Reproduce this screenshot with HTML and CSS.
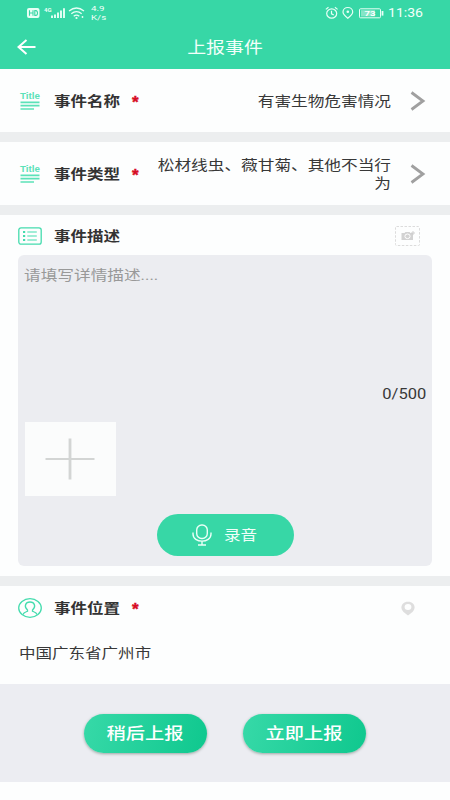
FILE: index.html
```html
<!DOCTYPE html>
<html lang="zh-CN">
<head>
<meta charset="utf-8">
<title>上报事件</title>
<link rel="stylesheet" href="styles.css">
</head>
<body>
<header class="header">
  <div class="status">
    <svg class="signals" width="60" height="16" viewBox="0 0 60 16">
      <rect x="0" y="3" width="12.5" height="10" rx="2" fill="#e8fff6"/>
      <path d="M2.5 5.3v5.4M6 5.3v5.4M2.5 8H6M7.8 5.6v4.8h1.1q1.6 0 1.6-2.4T8.900 5.600z" fill="none" stroke="#37d7a6" stroke-width="1.1"/>
      <path d="M25 13v-2.500M28 13V9.500M31 13V7.500M34 13V5.500M37 13V3.200" stroke="#e8fff6" stroke-width="1.9"/>
      <g fill="none" stroke="#e8fff6" stroke-width="1.3"><path d="M42 6q7.500-6 15 0M44.300 8.700q5.200-4.200 10.400 0M46.700 11.200q2.800-2.200 5.600 0"/></g>
      <circle cx="49.500" cy="13" r="1.100" fill="#e8fff6"/><circle cx="55.500" cy="12" r=".9" fill="#e8fff6"/>
      <text class="tiny" x="17" y="7">4G</text>
    </svg>
    <div class="speed"><span>4.9</span><span>K/s</span></div>
    <svg class="indicators" width="60" height="16" viewBox="0 0 60 16">
      <g fill="none" stroke="#e8fff6" stroke-width="1.200">
        <ellipse cx="6.700" cy="8.500" rx="5" ry="4.600"/><path d="M6.500 5.800v3l2.300 1.300M.8 4.400l2.700-2.100M12.600 4.400L9.900 2.300"/>
        <path d="M22.800 13.300Q18 9.500 18 7c0-6 9.700-6 9.700 0q0 2.500-4.900 6.300z"/>
        <rect x="34.500" y="3.800" width="21" height="9" rx="1" stroke-width="1"/>
      </g>
      <circle cx="22.800" cy="6.800" r="1.300" fill="#e8fff6"/>
      <rect x="36" y="5.200" width="14" height="6.200" fill="#86e5c7"/><rect x="56.600" y="6" width="1.800" height="4.600" fill="#e8fff6"/>
      <text class="battery" x="39.500" y="11.300" textLength="11" lengthAdjust="spacingAndGlyphs">73</text>
    </svg>
    <span class="clock">11:36</span>
  </div>
  <div class="nav">
    <svg class="back" width="20" height="16" viewBox="0 0 20 16"><path d="M18.500 8H2M9.500 1L1.500 8l8 7" fill="none" stroke="#fff" stroke-width="2"/></svg>
    <h1 class="wide">上报事件</h1>
  </div>
</header>

<section class="row">
  <svg class="icon" width="24" height="20" viewBox="0 0 24 20"><text class="title-icon" x="2" y="8.300" textLength="20" lengthAdjust="spacingAndGlyphs">Title</text><path d="M2.500 11.300h19M2.500 14.700h19M2.500 18h13.500" stroke="#5ce2b8" stroke-width="1.700"/></svg>
  <h2 class="wide">事件名称</h2><span class="star">*</span>
  <p class="value wide">有害生物危害情况</p>
  <svg class="chevron" width="16" height="20" viewBox="0 0 16 20"><path d="M1.500 1.500L13 10 1.500 18.500" fill="none" stroke="#a0a0a0" stroke-width="2.800"/></svg>
</section>

<section class="row">
  <svg class="icon" width="24" height="20" viewBox="0 0 24 20"><text class="title-icon" x="2" y="8.300" textLength="20" lengthAdjust="spacingAndGlyphs">Title</text><path d="M2.500 11.300h19M2.500 14.700h19M2.500 18h13.500" stroke="#5ce2b8" stroke-width="1.700"/></svg>
  <h2 class="wide">事件类型</h2><span class="star">*</span>
  <p class="value wide">松材线虫、薇甘菊、其他不当行为</p>
  <svg class="chevron" width="16" height="20" viewBox="0 0 16 20"><path d="M1.500 1.500L13 10 1.500 18.500" fill="none" stroke="#a0a0a0" stroke-width="2.800"/></svg>
</section>

<section class="detail">
  <div class="heading">
    <svg class="icon" width="24" height="18" viewBox="0 0 24 18"><rect x=".8" y=".8" width="22.400" height="16.400" rx="2.200" fill="none" stroke="#45dcae" stroke-width="1.300"/><path d="M5 5h2.200M5 9h2.200M5 13h2.200" stroke="#45dcae" stroke-width="1.800"/><path d="M9.300 5h9.500M9.300 9h9.500M9.300 13h9.500" stroke="#45dcae" stroke-width="1.200"/></svg>
    <h2 class="wide">事件描述</h2>
    <svg class="camera" width="25" height="20" viewBox="0 0 25 20"><rect x=".5" y=".5" width="24" height="19" rx="1" fill="none" stroke="#dcdcdc" stroke-dasharray="2.500 1.500"/><path d="M6.500 7h3l1-1h4l1 1h2.500v7H6.500z" fill="#d2d2d2"/><ellipse cx="12.500" cy="10.300" rx="2.600" ry="2.300" fill="#d2d2d2" stroke="#fff"/><path d="M18 5v4M16 7h4" stroke="#ccc" stroke-width=".9"/></svg>
  </div>
  <div class="editor">
    <p class="placeholder wide">请填写详情描述....</p>
    <p class="count">0/500</p>
    <div class="add"><svg width="50" height="42" viewBox="0 0 50 42"><path d="M.5 21h49" stroke="#d3d5d4" stroke-width="2.200"/><path d="M25 .5v41" stroke="#d3d5d4" stroke-width="2.800"/></svg></div>
    <div class="record">
      <svg width="20" height="22" viewBox="0 0 20 22"><g fill="none" stroke="#eafff7" stroke-width="1.400"><rect x="4.700" y="1" width="10.600" height="13.500" rx="5"/><path d="M1 8.500v1.500c0 9.500 18 9.500 18 0V8.500M10 17.300V21M6 21h8"/></g></svg>
      <span class="wide">录音</span>
    </div>
  </div>
</section>

<section class="location">
  <div class="heading">
    <svg class="icon" width="24" height="20" viewBox="0 0 24 20"><g fill="none" stroke="#45dcae" stroke-width="1.300"><ellipse cx="12" cy="10" rx="11.300" ry="9.300"/><path d="M5 16.500c.5-2 2.500-2.500 4.500-3.300V12C5.500 8.500 7.500 4 12 4s6.500 4.500 2.500 8v1.200c2 .8 4 1.300 4.500 3.300"/></g></svg>
    <h2 class="wide">事件位置</h2><span class="star">*</span>
    <svg class="pin" width="14" height="15" viewBox="0 0 14 15"><path d="M7 14.500L2.500 11C-1.500 7 .5.700 7 .7s8.500 6.300 4.500 10.300z" fill="#dedede"/><ellipse cx="7" cy="6" rx="3.400" ry="2.900" fill="#fdfefe"/></svg>
  </div>
  <p class="address wide">中国广东省广州市</p>
</section>

<footer class="actions">
  <div class="button"><span class="wide">稍后上报</span></div>
  <div class="button"><span class="wide">立即上报</span></div>
</footer>
</body>
</html>
```
FILE: styles.css
```css
* { box-sizing: border-box; }
body { margin: 0; width: 450px; height: 800px; overflow: hidden; background: #fdfefe; color: #383838; font: 14px/18px Roboto, "Noto Sans CJK SC", sans-serif; }
h1, h2, p { margin: 0; font-weight: 400; }
svg { display: block; flex: none; }
.wide { transform: scaleX(1.18); transform-origin: left center; white-space: nowrap; }
.header { height: 69px; background: #37d7a6; color: #f2fffa; }
.status { height: 26px; display: flex; align-items: center; padding: 0 27px; }
.speed { display: flex; flex-direction: column; margin-left: 4px; font-size: 8px; line-height: 9px; transform: scaleX(1.22); transform-origin: left; }
.indicators { margin-left: auto; }
.tiny { font: bold 6px Roboto, sans-serif; fill: #e8fff6; }
.battery { font: bold 7.5px Roboto, sans-serif; fill: #fff; }
.clock { width: 35px; margin-left: 3px; font-size: 12px; transform: scaleX(1.17); transform-origin: left; }
.nav { height: 43px; display: flex; align-items: center; justify-content: center; position: relative; }
.back { position: absolute; left: 17px; top: 13px; }
.nav h1 { font-size: 16px; transform-origin: center; }
.row { height: 63px; margin-bottom: 10px; padding: 0 24px 0 18px; display: flex; align-items: center; background: #fdfefe; box-shadow: 0 10px #eceeef; }
.icon { margin-right: 12px; }
.title-icon { font: bold 9.5px "Liberation Sans", sans-serif; fill: #5ce2b8; }
h2 { width: 56px; flex: none; font-size: 14px; font-weight: 700; color: #333; }
.star { width: 8px; flex: none; margin-left: 22px; color: #d70d24; font: bold 17px/18px "Liberation Sans", sans-serif; padding-top: 4px; -webkit-text-stroke: .4px #d70d24; }
.value { width: 198px; margin-left: auto; margin-right: 19px; text-align: right; transform: scaleX(1.19); transform-origin: right; white-space: normal; }
.detail { height: 361px; padding: 11px 18px 9px; background: #fdfefe; }
.heading { height: 20px; display: flex; align-items: center; }
.camera { margin-left: auto; margin-right: 12px; }
.editor { height: 311px; margin-top: 9px; padding: 11px 6px; border-radius: 6px; background: #ecedf1; display: flex; flex-direction: column; }
.placeholder { align-self: flex-start; color: #999; transform: scaleX(1.19); }
.count { align-self: flex-end; margin-top: 101px; transform: scaleX(1.18); transform-origin: right; }
.add { width: 91px; height: 75px; margin: 18.5px 0 0 .5px; background: #fbfcfc; display: flex; align-items: center; justify-content: center; }
.record { width: 137px; height: 42px; align-self: center; margin-top: 18px; padding-left: 35px; border-radius: 21px; background: #37d7a6; color: #f0fff9; display: flex; align-items: center; gap: 12px; position: relative; top: .5px; }
.location { height: 108px; border-top: 10px solid #eceeef; padding: 12px 18px 0; background: #fdfefe; }
.pin { margin-left: auto; margin-right: 17px; }
.address { width: 112px; margin: 26px 0 0 1px; }
.actions { height: 98px; background: #ecedf2; display: flex; justify-content: center; gap: 36px; padding-top: 30px; }
.button { width: 123px; height: 39px; border-radius: 20px; background: linear-gradient(105deg, #37d9a8, #0fc88e); color: #fff; box-shadow: 0 1px 3px #9aa5a2; display: flex; align-items: center; justify-content: center; font-size: 16px; font-weight: 500; }
.button .wide { transform: scaleX(1.2); transform-origin: center; }
```
